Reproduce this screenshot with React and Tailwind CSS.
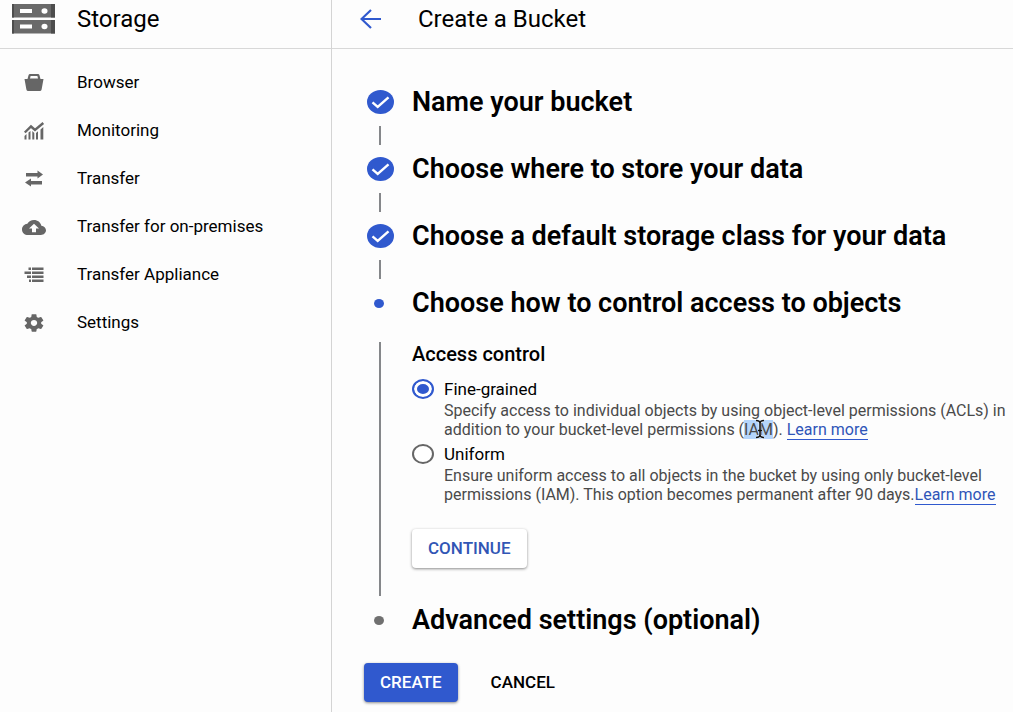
import React, { useState } from "react";

const navItems = [
  { label: "Browser", Icon: BucketIcon },
  { label: "Monitoring", Icon: MonitoringIcon },
  { label: "Transfer", Icon: TransferIcon },
  { label: "Transfer for on-premises", Icon: CloudUploadIcon },
  { label: "Transfer Appliance", Icon: ApplianceIcon },
  { label: "Settings", Icon: GearIcon },
];

function StorageIcon() {
  return (
    <svg viewBox="0 0 43 30" className="h-[30px] w-[43px]" aria-hidden="true">
      <path d="M0 0H43V13.500H0ZM0 16H43V29.500H0Z" fill="#6a6a6a" />
      <path d="M0 0H2V13.500H0ZM39 0H43V13.500H39ZM0 16H2V29.500H0ZM39 16H43V29.500H39Z" fill="#4d4d4d" />
      <path d="M8 5H20V9H8ZM8 20.500H20V24.500H8Z" fill="#fff" />
      <ellipse cx="32.500" cy="7" rx="3" ry="2.700" fill="#fff" />
      <ellipse cx="32.500" cy="22.500" rx="3" ry="2.700" fill="#fff" />
    </svg>
  );
}

function BucketIcon() {
  return (
    <svg viewBox="0 0 24 20" className="h-[20px] w-[24px]" fill="#666" aria-hidden="true">
      <path d="M2.500 6H5.500L6.600 2.100Q6.900 1 8 1H16Q17.100 1 17.400 2.100L18.500 6H21.500L19.600 16.500Q19.300 18 17.800 18H6.200Q4.700 18 4.400 16.500ZM8 5.500H16L15.400 3H8.600Z" />
    </svg>
  );
}

function MonitoringIcon() {
  return (
    <svg viewBox="0 0 24 20" className="h-[20px] w-[24px]" aria-hidden="true">
      <path d="M2.800 11.500L9 5.500L13 9L21.300 2" fill="none" stroke="#666" strokeWidth="2.400" />
      <path d="M2.500 15L4.500 13V18.500H2.500ZM6.500 11.500L8.500 10V18.500H6.500ZM10.300 10L12.300 12V18.500H10.300ZM14 12L16 10.300V18.500H14ZM18.500 8.500L21.300 6V18.500H18.500Z" fill="#666" />
    </svg>
  );
}

function TransferIcon() {
  return (
    <svg viewBox="0 0 24 20" className="h-[20px] w-[24px]" fill="#666" aria-hidden="true">
      <path d="M4 4H15.500V1.500L21 5.500L15.500 9.500V7.500H4ZM20 12H9V9.500L3 13.500L9 17.500V15.500H20Z" />
    </svg>
  );
}

function CloudUploadIcon() {
  return (
    <svg viewBox="0 4 24 16" preserveAspectRatio="none" className="h-[15px] w-[24px]" fill="#666" aria-hidden="true">
      <path d="M19.350 10.040C18.670 6.590 15.640 4 12 4 9.110 4 6.600 5.640 5.350 8.040 2.340 8.360 0 10.910 0 14c0 3.310 2.690 6 6 6h13c2.760 0 5-2.240 5-5 0-2.640-2.050-4.780-4.650-4.960zM14 13v4h-4v-4H7l5-5 5 5h-3z" />
    </svg>
  );
}

function ApplianceIcon() {
  return (
    <svg viewBox="0 0 24 20" className="h-[20px] w-[24px]" fill="#666" aria-hidden="true">
      <path d="M10 2.500H21.500V5H10ZM10 6.500H21.500V9H10ZM10 10.500H21.500V13H10ZM10 14.500H21.500V17H10ZM6.500 2.500H9V5H6.500ZM2.500 6.500H9V9H2.500ZM5 10.500H9V13H5ZM7 14.500H9V17H7Z" />
    </svg>
  );
}

function GearIcon() {
  return (
    <svg viewBox="2 2 20 20" preserveAspectRatio="none" className="h-[18px] w-[20px]" fill="#666" aria-hidden="true">
      <path d="M19.140 12.940c.04-.3.06-.61.06-.94 0-.32-.02-.64-.07-.94l2.030-1.580c.18-.14.23-.41.12-.61l-1.920-3.320c-.12-.22-.37-.29-.59-.22l-2.390.96c-.5-.38-1.030-.7-1.620-.94l-.36-2.540c-.04-.24-.24-.41-.48-.41h-3.840c-.24 0-.43.17-.47.41l-.36 2.540c-.59.24-1.130.57-1.620.94l-2.390-.96c-.22-.08-.47 0-.59.22L2.740 8.870c-.12.21-.08.47.12.61l2.030 1.580c-.05.3-.09.63-.09.94s.02.64.07.94l-2.030 1.580c-.18.14-.23.41-.12.61l1.920 3.320c.12.22.37.29.59.22l2.390-.96c.5.38 1.030.7 1.620.94l.36 2.540c.05.24.24.41.48.41h3.840c.24 0 .44-.17.47-.41l.36-2.540c.59-.24 1.130-.56 1.620-.94l2.390.96c.22.08.47 0 .59-.22l1.920-3.320c.12-.22.07-.47-.12-.61zM12 15.200c-1.760 0-3.200-1.440-3.200-3.200s1.440-3.200 3.200-3.200 3.200 1.440 3.200 3.200-1.440 3.200-3.200 3.200z" />
    </svg>
  );
}

function CheckIcon() {
  return (
    <svg viewBox="0 0 27 24" className="h-[24px] w-[27px]" role="img" aria-label="Completed">
      <ellipse cx="13.500" cy="12" rx="13.500" ry="12" fill="#3059ce" />
      <path d="M5.500 12.300L10.700 16.800L21.500 7.300" fill="none" stroke="#fff" strokeWidth="2.400" />
    </svg>
  );
}

function TextCursor() {
  return (
    <svg viewBox="0 0 10 20" className="absolute left-[11px] -top-px h-[20px] w-[10px]" aria-hidden="true">
      <path d="M1 1.500Q5 1.500 5 4.500Q5 1.500 9 1.500M5 4V16M1 18.500Q5 18.500 5 15.500Q5 18.500 9 18.500M3 11.500H7" fill="none" stroke="#fff" strokeOpacity="0.6" strokeWidth="3" />
      <path d="M1 1.500Q5 1.500 5 4.500Q5 1.500 9 1.500M5 4V16M1 18.500Q5 18.500 5 15.500Q5 18.500 9 18.500M3 11.500H7" fill="none" stroke="#111" strokeWidth="1.500" />
    </svg>
  );
}

function Step({ marker, children }) {
  return (
    <div className="flex h-12 items-center gap-[18px]">
      <span className="flex w-[27px] shrink-0 justify-center">{marker}</span>
      <h2 className="whitespace-nowrap text-[27px] font-semibold leading-8">{children}</h2>
    </div>
  );
}

function Connector() {
  return (
    <div className="flex h-[19px] w-[26px] justify-center">
      <span className="w-[2px] bg-[#85878a]" />
    </div>
  );
}

function Dot({ className }) {
  return <span className={"mr-[3px] h-[9px] w-[10px] rounded-[50%] " + className} />;
}

function LearnMore() {
  return (
    <a href="#learn-more" className="border-b border-[#3059ce] text-[#2f55b8]">
      Learn more
    </a>
  );
}

function Option({ id, label, checked, onSelect, children }) {
  return (
    <div className="grid grid-cols-[22px_1fr] gap-x-[10px]">
      <div className="flex h-6 items-center">
        <input
          type="radio"
          name="access"
          id={id}
          checked={checked}
          onChange={onSelect}
          className="h-[20px] w-[22px] appearance-none rounded-[50%] border-[2px] border-[#666] bg-white checked:border-[#3059ce] checked:bg-[#3059ce] checked:shadow-[inset_0_0_0_3px_#fff]"
        />
      </div>
      <label htmlFor={id} className="text-[17px] leading-6">
        {label}
      </label>
      <p className="col-start-2 text-[16px] leading-[19px] text-[#4a4a4a]">{children}</p>
    </div>
  );
}

export default function App() {
  const [access, setAccess] = useState("fine");
  return (
    <div className="flex min-h-screen bg-[#fdfdfd] font-['Roboto',sans-serif] text-black">
      <aside className="w-[332px] shrink-0 border-r border-[#d4d4d4]">
        <header className="flex h-[49px] items-center gap-[22px] border-b border-[#d8d8d8] pb-[10px] pl-3">
          <StorageIcon />
          <h1 className="text-[24px] leading-7">Storage</h1>
        </header>
        <nav className="pt-[10px]">
          {navItems.map(({ label, Icon }) => (
            <a key={label} href="#nav" className="flex h-12 items-center gap-[31px] pl-[22px] text-[17px]">
              <span className="flex w-6 justify-center">
                <Icon />
              </span>
              {label}
            </a>
          ))}
        </nav>
      </aside>

      <div className="min-w-0 flex-1">
        <header className="flex h-[49px] items-center gap-9 border-b border-[#d8d8d8] pb-[10px] pl-7">
          <button type="button" aria-label="Back">
            <svg viewBox="0 0 22 20" className="h-[20px] w-[22px]" aria-hidden="true">
              <path d="M21 10H2M11 1L1.500 10L11 19" fill="none" stroke="#3059ce" strokeWidth="2.200" />
            </svg>
          </button>
          <h1 className="text-[24px] leading-7">Create a Bucket</h1>
        </header>

        <main className="pt-[29px]">
          <div className="pl-[35px]">
            <Step marker={<CheckIcon />}>Name your bucket</Step>
            <Connector />
            <Step marker={<CheckIcon />}>Choose where to store your data</Step>
            <Connector />
            <Step marker={<CheckIcon />}>Choose a default storage class for your data</Step>
            <Connector />
            <Step marker={<Dot className="bg-[#3059ce]" />}>Choose how to control access to objects</Step>

            <div className="mt-[15px] flex gap-[19px]">
              <div className="flex w-[26px] shrink-0 justify-center">
                <span className="w-[2px] bg-[#85878a]" />
              </div>
              <section className="min-w-0 max-w-[600px] flex-1 pb-7">
                <h3 className="mb-[11px] text-[20px] font-medium leading-6">Access control</h3>
                <div className="flex flex-col gap-[3px]">
                  <Option id="fine" label="Fine-grained" checked={access === "fine"} onSelect={() => setAccess("fine")}>
                    Specify access to individual objects by using object-level permissions (ACLs) in addition to your
                    bucket-level permissions (
                    <span className="relative bg-[#b5d5fb]">
                      IAM
                      <TextCursor />
                    </span>
                    ). <LearnMore />
                  </Option>
                  <Option id="uniform" label="Uniform" checked={access === "uniform"} onSelect={() => setAccess("uniform")}>
                    Ensure uniform access to all objects in the bucket by using only bucket-level permissions (IAM). This
                    option becomes permanent after 90 days.
                    <LearnMore />
                  </Option>
                </div>
                <button
                  type="button"
                  className="mt-[25px] h-[39px] rounded-[4px] bg-white px-4 text-[17px] font-medium text-[#3156b5] shadow-[0_1px_3px_rgba(0,0,0,0.45)]"
                >
                  CONTINUE
                </button>
              </section>
            </div>

            <Step marker={<Dot className="bg-[#707070]" />}>Advanced settings (optional)</Step>
          </div>

          <div className="mt-[19px] flex gap-[17px] pl-8">
            <button
              type="button"
              className="h-[39px] rounded-[4px] bg-[#3059ce] px-4 text-[17px] font-medium text-white shadow-[0_1px_3px_rgba(0,0,0,0.45)]"
            >
              CREATE
            </button>
            <button type="button" className="h-[39px] px-4 text-[17px] font-medium">
              CANCEL
            </button>
          </div>
        </main>
      </div>
    </div>
  );
}
